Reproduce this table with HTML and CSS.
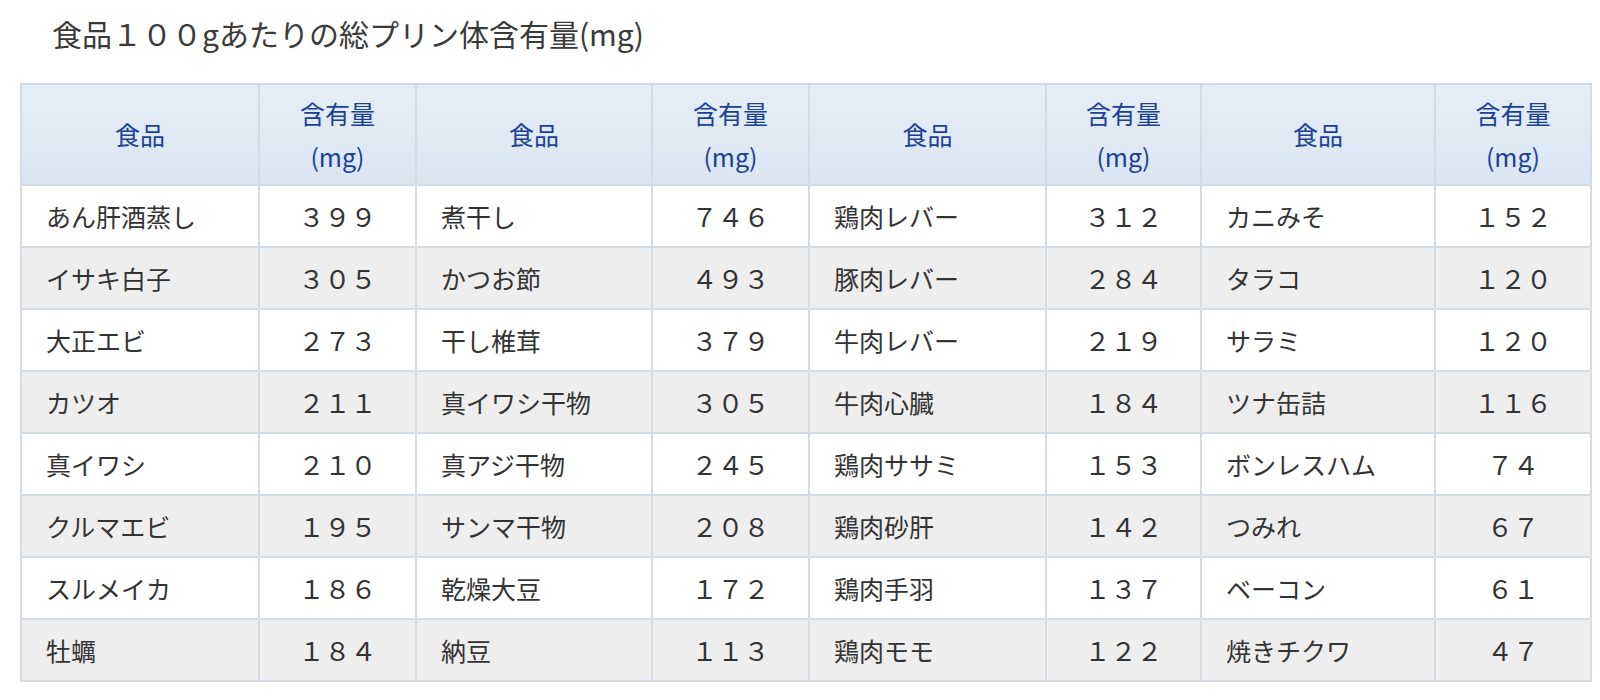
FILE: index.html
```html
<!DOCTYPE html>
<html lang="ja">
<head>
<meta charset="utf-8">
<link rel="stylesheet" href="styles.css">
</head>
<body>
<div class="title">食品１００gあたりの総プリン体含有量(mg)</div>
<table class="purine">
<colgroup>
<col class="c-food1"><col class="c-amt1"><col class="c-food2"><col class="c-amt2"><col class="c-food3"><col class="c-amt3"><col class="c-food4"><col class="c-amt4">
</colgroup>
<thead>
<tr>
<th>食品</th><th>含有量<br>(mg)</th><th>食品</th><th>含有量<br>(mg)</th><th>食品</th><th>含有量<br>(mg)</th><th>食品</th><th>含有量<br>(mg)</th>
</tr>
</thead>
<tbody>
<tr><td class="food">あん肝酒蒸し</td><td class="amt">３９９</td><td class="food">煮干し</td><td class="amt">７４６</td><td class="food">鶏肉レバー</td><td class="amt">３１２</td><td class="food">カニみそ</td><td class="amt">１５２</td></tr>
<tr><td class="food">イサキ白子</td><td class="amt">３０５</td><td class="food">かつお節</td><td class="amt">４９３</td><td class="food">豚肉レバー</td><td class="amt">２８４</td><td class="food">タラコ</td><td class="amt">１２０</td></tr>
<tr><td class="food">大正エビ</td><td class="amt">２７３</td><td class="food">干し椎茸</td><td class="amt">３７９</td><td class="food">牛肉レバー</td><td class="amt">２１９</td><td class="food">サラミ</td><td class="amt">１２０</td></tr>
<tr><td class="food">カツオ</td><td class="amt">２１１</td><td class="food">真イワシ干物</td><td class="amt">３０５</td><td class="food">牛肉心臓</td><td class="amt">１８４</td><td class="food">ツナ缶詰</td><td class="amt">１１６</td></tr>
<tr><td class="food">真イワシ</td><td class="amt">２１０</td><td class="food">真アジ干物</td><td class="amt">２４５</td><td class="food">鶏肉ササミ</td><td class="amt">１５３</td><td class="food">ボンレスハム</td><td class="amt">７４</td></tr>
<tr><td class="food">クルマエビ</td><td class="amt">１９５</td><td class="food">サンマ干物</td><td class="amt">２０８</td><td class="food">鶏肉砂肝</td><td class="amt">１４２</td><td class="food">つみれ</td><td class="amt">６７</td></tr>
<tr><td class="food">スルメイカ</td><td class="amt">１８６</td><td class="food">乾燥大豆</td><td class="amt">１７２</td><td class="food">鶏肉手羽</td><td class="amt">１３７</td><td class="food">ベーコン</td><td class="amt">６１</td></tr>
<tr><td class="food">牡蠣</td><td class="amt">１８４</td><td class="food">納豆</td><td class="amt">１１３</td><td class="food">鶏肉モモ</td><td class="amt">１２２</td><td class="food">焼きチクワ</td><td class="amt">４７</td></tr>
</tbody>
</table>
</body>
</html>
```

FILE: styles.css
```css
html, body {
  margin: 0;
  padding: 0;
  background: #ffffff;
}

body {
  font-family: "Noto Sans CJK JP", "Noto Sans", sans-serif;
  color: #333333;
}

.title {
  padding: 13px 0 0 52px;
  font-size: 30px;
  line-height: 40px;
  height: 40px;
  color: #3a3a3a;
}

.purine {
  margin: 30px 0 0 20px;
  width: 1570px;
  border-collapse: collapse;
  table-layout: fixed;
  font-size: 25px;
}

.c-food1 { width: 238px; }
.c-amt1 { width: 157px; }
.c-food2 { width: 236px; }
.c-amt2 { width: 157px; }
.c-food3 { width: 237px; }
.c-amt3 { width: 155px; }
.c-food4 { width: 234px; }
.c-amt4 { width: 156px; }

.purine th,
.purine td {
  border: 2px solid #d3dce5;
}

.purine th {
  height: 99px;
  padding: 0;
  font-size: 25px;
  font-weight: normal;
  line-height: 43px;
  color: #1d3f96;
  background: linear-gradient(#e5eef7, #d9e6f2);
  text-align: center;
  vertical-align: middle;
}

.purine td {
  height: 60px;
  padding: 0;
  line-height: 60px;
  vertical-align: middle;
  color: #333333;
}

.purine tbody tr:nth-child(even) td {
  background: #eeeeee;
}

.purine td.food {
  padding-left: 24px;
  text-align: left;
}

.purine td.amt {
  font-size: 26px;
  text-align: center;
}
```
